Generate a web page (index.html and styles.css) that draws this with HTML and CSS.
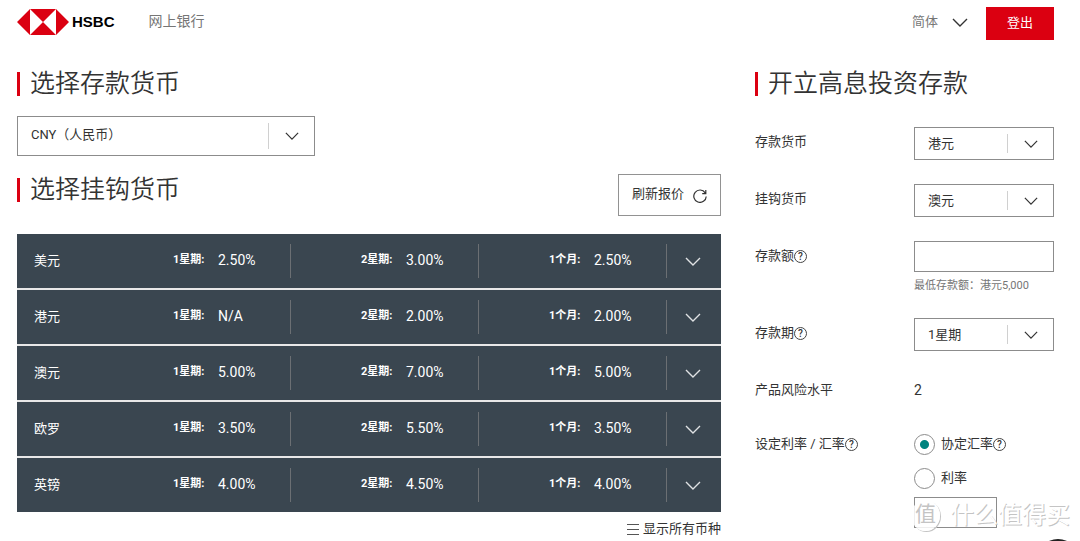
FILE: index.html
```html
<!DOCTYPE html>
<html lang="zh-CN">
<head>
<meta charset="utf-8">
<title>HSBC 网上银行</title>
<link rel="stylesheet" href="styles.css">
</head>
<body>
<svg class="sprite" aria-hidden="true">
  <symbol id="chevron" viewBox="0 0 16 9"><path d="M1 1l7 7 7-7" fill="none" stroke="currentColor" stroke-width="1.4"/></symbol>
</svg>
<div class="page">
  <header class="header">
    <a class="logo" href="#">
      <svg class="logo-mark" viewBox="0 0 52 26" aria-hidden="true">
        <path d="M13 0L0 13l13 13z M39 0l13 13-13 13z M13 0h26L26 13z M13 26h26L26 13z" fill="#db0011"/>
      </svg>
      <span class="logo-name">HSBC</span>
    </a>
    <a class="header-link" href="#">网上银行</a>
    <button class="language" type="button">简体<svg class="chevron chevron-large"><use href="#chevron"/></svg></button>
    <button class="logout" type="button">登出</button>
  </header>

  <main class="columns">
    <section class="rates">
      <h2 class="title" id="deposit-title">选择存款货币</h2>
      <div class="select select-large">
        <select class="select-box" aria-labelledby="deposit-title"><option>CNY（人民币）</option></select>
        <span class="select-arrow"><svg class="chevron"><use href="#chevron"/></svg></span>
      </div>
      <div class="linked-head">
        <h2 class="title">选择挂钩货币</h2>
        <button class="refresh" type="button">刷新报价
          <svg class="refresh-icon" viewBox="0 0 14 14" aria-hidden="true"><path d="M12.2 3.8A6.2 6.2 0 1 0 13.2 7.4M12.8 1v3.6H9.2" fill="none" stroke="currentColor" stroke-width="1.2"/></svg>
        </button>
      </div>
      <table class="table">
        <tbody>
          <tr><th class="currency" scope="row">美元</th><td class="rate"><div class="rate-in"><b class="term">1星期:</b><span>2.50%</span></div></td><td class="rate"><div class="rate-in"><b class="term">2星期:</b><span>3.00%</span></div></td><td class="rate"><div class="rate-in"><b class="term">1个月:</b><span>2.50%</span></div></td><td class="more"><button class="expand" type="button" aria-label="展开美元"><svg class="chevron chevron-large"><use href="#chevron"/></svg></button></td></tr>
          <tr><th class="currency" scope="row">港元</th><td class="rate"><div class="rate-in"><b class="term">1星期:</b><span>N/A</span></div></td><td class="rate"><div class="rate-in"><b class="term">2星期:</b><span>2.00%</span></div></td><td class="rate"><div class="rate-in"><b class="term">1个月:</b><span>2.00%</span></div></td><td class="more"><button class="expand" type="button" aria-label="展开港元"><svg class="chevron chevron-large"><use href="#chevron"/></svg></button></td></tr>
          <tr><th class="currency" scope="row">澳元</th><td class="rate"><div class="rate-in"><b class="term">1星期:</b><span>5.00%</span></div></td><td class="rate"><div class="rate-in"><b class="term">2星期:</b><span>7.00%</span></div></td><td class="rate"><div class="rate-in"><b class="term">1个月:</b><span>5.00%</span></div></td><td class="more"><button class="expand" type="button" aria-label="展开澳元"><svg class="chevron chevron-large"><use href="#chevron"/></svg></button></td></tr>
          <tr><th class="currency" scope="row">欧罗</th><td class="rate"><div class="rate-in"><b class="term">1星期:</b><span>3.50%</span></div></td><td class="rate"><div class="rate-in"><b class="term">2星期:</b><span>5.50%</span></div></td><td class="rate"><div class="rate-in"><b class="term">1个月:</b><span>3.50%</span></div></td><td class="more"><button class="expand" type="button" aria-label="展开欧罗"><svg class="chevron chevron-large"><use href="#chevron"/></svg></button></td></tr>
          <tr><th class="currency" scope="row">英镑</th><td class="rate"><div class="rate-in"><b class="term">1星期:</b><span>4.00%</span></div></td><td class="rate"><div class="rate-in"><b class="term">2星期:</b><span>4.50%</span></div></td><td class="rate"><div class="rate-in"><b class="term">1个月:</b><span>4.00%</span></div></td><td class="more"><button class="expand" type="button" aria-label="展开英镑"><svg class="chevron chevron-large"><use href="#chevron"/></svg></button></td></tr>
        </tbody>
      </table>
      <a class="show-all" href="#"><svg class="list-icon" viewBox="0 0 12 12" aria-hidden="true"><path d="M0 1.5h12M0 6.5h12M0 11.5h12" stroke="#555" fill="none"/></svg>显示所有币种</a>
    </section>

    <form class="form">
      <h2 class="title">开立高息投资存款</h2>
      <div class="fields">
        <div class="field">
          <label class="label" for="deposit">存款货币</label>
          <div class="select">
            <select class="select-box" id="deposit"><option>港元</option></select>
            <span class="select-arrow"><svg class="chevron"><use href="#chevron"/></svg></span>
          </div>
        </div>
        <div class="field">
          <label class="label" for="linked">挂钩货币</label>
          <div class="select">
            <select class="select-box" id="linked"><option>澳元</option></select>
            <span class="select-arrow"><svg class="chevron"><use href="#chevron"/></svg></span>
          </div>
        </div>
        <div class="field">
          <div class="label"><label for="amount">存款额</label><button class="help" type="button">?</button></div>
          <div class="control">
            <input class="input" id="amount" type="text">
            <p class="hint">最低存款额：港元5,000</p>
          </div>
        </div>
        <div class="field">
          <div class="label"><label for="period">存款期</label><button class="help" type="button">?</button></div>
          <div class="select">
            <select class="select-box" id="period"><option>1星期</option></select>
            <span class="select-arrow"><svg class="chevron"><use href="#chevron"/></svg></span>
          </div>
        </div>
        <div class="field">
          <div class="label">产品风险水平</div>
          <div class="value">2</div>
        </div>
        <div class="field">
          <div class="label"><span>设定利率 / 汇率</span><button class="help" type="button">?</button></div>
          <div class="control">
            <div class="option"><input class="radio" type="radio" name="kind" id="fx" checked><label for="fx">协定汇率</label><button class="help" type="button">?</button></div>
            <div class="option"><input class="radio" type="radio" name="kind" id="interest"><label for="interest">利率</label></div>
            <input class="input input-short" type="text" aria-label="利率">
          </div>
        </div>
      </div>
    </form>
  </main>
  <div class="watermark"><span class="watermark-badge">值</span><span>什么值得买</span></div>
  <button class="float-button" type="button" aria-label="返回顶部"></button>
</div>
</body>
</html>
```
FILE: styles.css
```css
* { box-sizing: border-box; }

body {
  margin: 0;
  background: #fff;
  color: #333;
  font: 13px/20px Roboto, "Noto Sans CJK SC", sans-serif;
}

button, input, select {
  margin: 0;
  padding: 0;
  border: 0;
  border-radius: 0;
  background: none;
  color: inherit;
  font: inherit;
}

a { color: inherit; text-decoration: none; }

.sprite { position: absolute; width: 0; height: 0; }

.page {
  position: relative;
  height: 100vh;
  padding: 0 26px 0 17px;
  overflow: hidden;
}

.chevron { display: block; width: 14px; height: 8px; }
.chevron-large { width: 16px; height: 9px; }

.header {
  display: flex;
  align-items: center;
  height: 47px;
  padding-bottom: 1px;
  color: #767676;
}

.logo { display: flex; align-items: center; gap: 3px; margin-right: 34px; padding-bottom: 3px; }
.logo-mark { width: 52px; height: 26px; }
.logo-name { color: #000; font: bold 15px/20px "Liberation Sans", sans-serif; }
.header-link { padding-bottom: 4px; font-size: 14px; }
.language { display: flex; align-items: center; gap: 14px; margin-left: auto; padding-bottom: 2px; }
.language .chevron { color: #333; }
.logout { width: 68px; height: 33px; margin-left: 18px; background: #db0011; color: #fff; }

.columns {
  display: grid;
  grid-template-columns: minmax(0, 704fr) minmax(0, 299fr);
  gap: 34px;
  padding-top: 21px;
}

.title {
  display: flex;
  align-items: center;
  gap: 10px;
  height: 32px;
  margin: 0;
  font-size: 25px;
  font-weight: 350;
  line-height: 32px;
}
.title::before { content: ""; width: 3px; height: 24px; background: #db0011; }

.select { position: relative; flex: 1; height: 33px; }
.select-large { width: 298px; height: 40px; margin: 16px 0 18px; }
.select-box {
  width: 100%;
  height: 100%;
  padding: 0 48px 0 13px;
  border: 1px solid #8c8c8c;
  appearance: none;
}
.select-large .select-box { padding-bottom: 2px; }
.select-arrow {
  position: absolute;
  top: 7px;
  right: 0;
  bottom: 7px;
  display: flex;
  align-items: center;
  justify-content: center;
  width: 47px;
  border-left: 1px solid #d0d0d0;
  pointer-events: none;
}

.linked-head { display: flex; align-items: flex-start; justify-content: space-between; }
.refresh {
  display: flex;
  align-items: center;
  justify-content: center;
  gap: 9px;
  width: 103px;
  height: 42px;
  margin-bottom: 18px;
  padding-bottom: 3px;
  border: 1px solid #929292;
}
.refresh-icon { width: 14px; height: 14px; margin-top: 4px; }

.table { width: 100%; border-collapse: collapse; table-layout: fixed; color: #fff; }
.table tr { height: 56px; border-bottom: 2px solid #e8e8e8; background: #3a4650; }
.table tr:first-child { height: 55px; }
.table tr:last-child { height: 55px; border-bottom: 0; }
.table th, .table td { padding: 0; }
.table .currency { width: 86px; padding: 0 0 1px 17px; font-weight: 400; text-align: left; }
.rate-in {
  display: flex;
  align-items: center;
  height: 34px;
  padding: 0 0 2px 70px;
  border-right: 1px solid #6b6f73;
  font-size: 14px;
}
.term { width: 45px; font-size: 11px; }
.table .more { width: 54px; }
.expand {
  display: flex;
  align-items: center;
  justify-content: center;
  width: 100%;
  height: 34px;
  padding-right: 2px;
  color: #e0e2e4;
}

.show-all { display: flex; align-items: center; justify-content: flex-end; gap: 4px; margin-top: 7px; }
.list-icon { width: 12px; height: 12px; }

.fields { display: flex; flex-direction: column; gap: 24px; margin-top: 27px; }
.field { display: flex; align-items: flex-start; }
.label { display: flex; align-items: center; flex: 0 0 159px; line-height: 30px; }
.control { flex: 1; }
.help {
  width: 13px;
  height: 13px;
  border: 1px solid #444;
  border-radius: 50%;
  font-size: 10px;
  font-weight: 500;
  line-height: 11px;
  text-align: center;
}
.input { display: block; width: 100%; height: 31px; padding: 0 8px; border: 1px solid #8c8c8c; }
.input-short { width: 83px; }
.hint { margin: 5px 0 0; color: #767676; font-size: 11px; line-height: 18px; }
.field:nth-child(3) { margin-bottom: -1px; }
.value { font-size: 14px; line-height: 30px; }
.option { display: flex; align-items: center; height: 30px; margin-bottom: 4px; }
.radio {
  width: 21px;
  height: 21px;
  margin-right: 6px;
  border: 1px solid #8c8c8c;
  border-radius: 50%;
  appearance: none;
}
.radio:checked { background: radial-gradient(circle, #00847f 4px, transparent 5px); }

.watermark {
  position: absolute;
  right: 10px;
  bottom: 10px;
  display: flex;
  align-items: center;
  gap: 10px;
  color: #fff;
  font-size: 24px;
  line-height: 32px;
  text-shadow: 1px 1px 0 #c4c4c4;
}
.watermark-badge {
  width: 29px;
  height: 31px;
  border-radius: 50%;
  background: rgba(255, 255, 255, 0.85);
  box-shadow: 1px 1px 0 #c4c4c4;
  color: #c4c4c4;
  font-size: 21px;
  line-height: 28px;
  text-align: center;
  text-shadow: none;
}

.float-button {
  position: absolute;
  right: 0;
  bottom: -42px;
  width: 44px;
  height: 44px;
  border-radius: 50%;
  background: #222;
}
```
